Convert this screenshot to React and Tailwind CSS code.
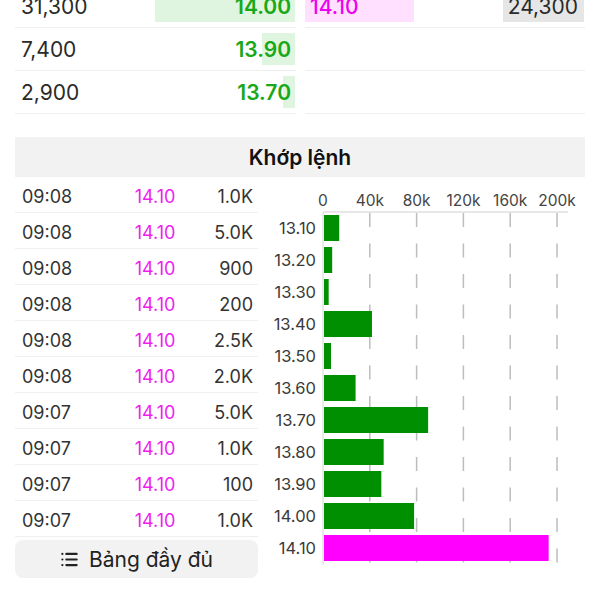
import React from "react";
import { List } from "lucide-react";

const bids = [
  { vol: "31,300", price: "14.00", bar: 140 },
  { vol: "7,400", price: "13.90", bar: 33 },
  { vol: "2,900", price: "13.70", bar: 12 },
];

const trades = [
  ["09:08", "14.10", "1.0K"],
  ["09:08", "14.10", "5.0K"],
  ["09:08", "14.10", "900"],
  ["09:08", "14.10", "200"],
  ["09:08", "14.10", "2.5K"],
  ["09:08", "14.10", "2.0K"],
  ["09:07", "14.10", "5.0K"],
  ["09:07", "14.10", "1.0K"],
  ["09:07", "14.10", "100"],
  ["09:07", "14.10", "1.0K"],
];

// volume per price level, in thousands
const levels = [
  ["13.10", 13],
  ["13.20", 7],
  ["13.30", 4],
  ["13.40", 41],
  ["13.50", 6],
  ["13.60", 27],
  ["13.70", 89],
  ["13.80", 51],
  ["13.90", 49],
  ["14.00", 77],
  ["14.10", 192],
];

const X0 = 323;
const PX_PER_K = 46.8 / 40;

function VolumeChart() {
  const ticks = [0, 40, 80, 120, 160, 200];
  return (
    <svg width="315" height="403" viewBox="270 177 315 403" className="block">
      {ticks.map((t) => (
        <text
          key={t}
          x={X0 + t * PX_PER_K}
          y={206}
          textAnchor="middle"
          fontSize="15.5"
          fill="#444"
          fontFamily="Inter, sans-serif"
        >
          {t === 0 ? "0" : `${t}k`}
        </text>
      ))}
      <line x1={X0} y1={212} x2={568} y2={212} stroke="#cfcfcf" strokeWidth="1" />
      <line x1={X0} y1={212} x2={X0} y2={565} stroke="#d6d6d6" strokeWidth="1" />
      {ticks.slice(1).map((t) => (
        <line
          key={t}
          x1={X0 + t * PX_PER_K}
          y1={213}
          x2={X0 + t * PX_PER_K}
          y2={564}
          stroke="#bdbdbd"
          strokeWidth="1.5"
          strokeDasharray="14 16.5"
        />
      ))}
      {levels.map(([label, v], i) => {
        const y = 215 + i * 32;
        const last = i === levels.length - 1;
        return (
          <g key={label}>
            <text
              x={316}
              y={y + 19}
              textAnchor="end"
              fontSize="16.5"
              fill="#3a3a3a"
              fontFamily="Inter, sans-serif"
            >
              {label}
            </text>
            <rect
              x={X0 + 1}
              y={y}
              width={v * PX_PER_K}
              height={26}
              fill={last ? "#ff00ff" : "#008f00"}
            />
          </g>
        );
      })}
    </svg>
  );
}

export default function App() {
  return (
    <div className="w-[600px] h-[600px] overflow-hidden bg-white font-['Inter',sans-serif] text-[#2a2a2a]">
      <div className="-mt-[15px] px-[15px]">
        <div className="grid grid-cols-[281px_280px] gap-x-[9px]">
          <div>
            {bids.map((b) => (
              <div
                key={b.price}
                className="relative flex items-center justify-between h-[43px] border-b border-[#efefef] pl-[6px] pr-[5px] pt-[2px]"
              >
                <div
                  className="absolute right-[1px] top-[5px] bottom-[5px] bg-[#dff5df]"
                  style={{ width: b.bar }}
                />
                <span className="relative text-[21px]">{b.vol}</span>
                <span className="relative text-[21px] font-semibold text-[#18a818]">
                  {b.price}
                </span>
              </div>
            ))}
          </div>
          <div>
            <div className="relative flex items-center justify-between h-[43px] border-b border-[#efefef]">
              <div className="self-stretch my-[5px] w-[109px] bg-[#ffe0ff] pl-[5px] pt-[2px] flex items-center text-[21px] font-medium text-[#ee00ee]">
                14.10
              </div>
              <div className="self-stretch my-[5px] w-[81px] mr-[1px] bg-[#e6e6e6] pr-[6px] pt-[2px] flex items-center justify-end text-[21px]">
                24,300
              </div>
            </div>
            <div className="h-[43px] border-b border-[#efefef]" />
            <div className="h-[43px] border-b border-[#efefef]" />
          </div>
        </div>

        <div className="mt-[23px] h-[40px] bg-[#f2f2f2] flex items-center justify-center pt-[2px] text-[21px] font-semibold text-[#111]">
          Khớp lệnh
        </div>

        <div className="flex">
          <div className="w-[243px]">
            {trades.map(([time, price, vol], i) => (
              <div
                key={i}
                className="flex items-center h-[36px] border-b border-[#efefef] pt-[3px] text-[18px] text-[#333]"
              >
                <span className="w-[100px] pl-[7px]">{time}</span>
                <span className="w-[80px] text-center text-[#ee22ee]">{price}</span>
                <span className="flex-1 text-right pr-[5px]">{vol}</span>
              </div>
            ))}
            <button className="mt-[3px] w-full h-[38px] rounded-lg bg-[#f2f2f2] flex items-center justify-center gap-[10px] pt-[1px] text-[21px] text-[#222]">
              <List size={19} strokeWidth={2.8} />
              <span>Bảng đầy đủ</span>
            </button>
          </div>
          <div className="ml-[12px]">
            <VolumeChart />
          </div>
        </div>
      </div>
    </div>
  );
}
